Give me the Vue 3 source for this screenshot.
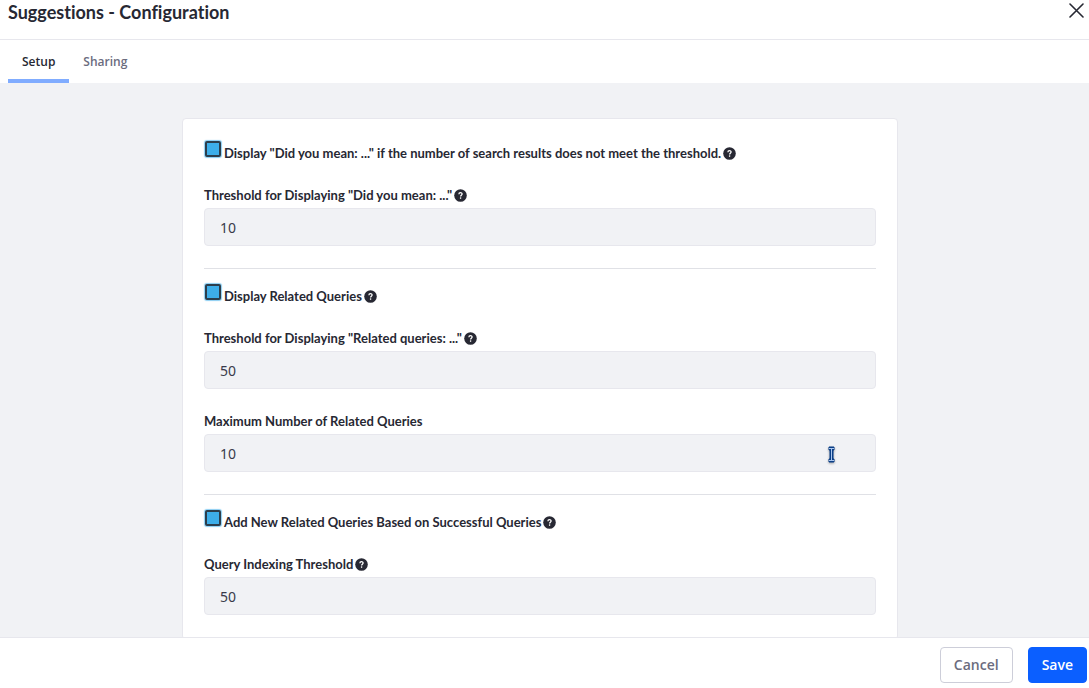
<script setup>
import { reactive } from 'vue'

const sections = reactive([
  {
    id: 'spellcheck',
    label: 'Display "Did you mean: ..." if the number of search results does not meet the threshold.',
    checked: true,
    fields: [
      { id: 'spellcheck-threshold', label: 'Threshold for Displaying "Did you mean: ..."', value: '10', help: true }
    ]
  },
  {
    id: 'related',
    label: 'Display Related Queries',
    checked: true,
    fields: [
      { id: 'related-threshold', label: 'Threshold for Displaying "Related queries: ..."', value: '50', help: true },
      { id: 'related-max', label: 'Maximum Number of Related Queries', value: '10', help: false, pointer: true }
    ]
  },
  {
    id: 'indexing',
    label: 'Add New Related Queries Based on Successful Queries',
    checked: true,
    fields: [
      { id: 'indexing-threshold', label: 'Query Indexing Threshold', value: '50', help: true }
    ]
  }
])
</script>

<template>
  <div class="dialog">
    <header class="header">
      <h1>Suggestions - Configuration</h1>
      <button class="close" type="button" aria-label="Close">
        <svg viewBox="0 0 16 16" width="16" height="16">
          <path d="M2 1 15 14M15 1 2 14" fill="none" stroke="#272833" stroke-width="1.6" stroke-linecap="round" />
        </svg>
      </button>
    </header>

    <nav class="tabs">
      <a class="tab active" href="#setup">Setup</a>
      <a class="tab" href="#sharing">Sharing</a>
    </nav>

    <main class="body">
      <form class="card">
        <section v-for="section in sections" :key="section.id" class="section">
          <div class="toggle">
            <input :id="section.id" v-model="section.checked" type="checkbox">
            <label :for="section.id">{{ section.label }}</label>
            <svg class="help" viewBox="0 0 13 13" width="13" height="13">
              <circle cx="6.5" cy="6.5" r="6.3" fill="#272833" />
              <path d="M4.9 5.2C4.9 3.2 8.1 3.2 8.1 5.1C8.1 6.2 6.6 6.2 6.6 7.5" fill="none" stroke="#fff" stroke-width="1.3" />
              <circle cx="6.6" cy="9.1" r=".8" fill="#fff" />
            </svg>
          </div>
          <div v-for="field in section.fields" :key="field.id" class="field">
            <div class="caption">
              <label :for="field.id">{{ field.label }}</label>
              <svg v-if="field.help" class="help" viewBox="0 0 13 13" width="13" height="13">
                <circle cx="6.5" cy="6.5" r="6.3" fill="#272833" />
                <path d="M4.9 5.2C4.9 3.2 8.1 3.2 8.1 5.1C8.1 6.2 6.6 6.2 6.6 7.5" fill="none" stroke="#fff" stroke-width="1.3" />
                <circle cx="6.6" cy="9.1" r=".8" fill="#fff" />
              </svg>
            </div>
            <div class="control">
              <input :id="field.id" v-model="field.value" type="text">
              <svg v-if="field.pointer" class="pointer" viewBox="0 0 7 17" width="7" height="17">
                <path d="M1 1H6V4H5V13H6V16H1V13H2V4H1Z" fill="#0b3f87" stroke="#0b3f87" />
                <path d="M1 2.5H6M3.5 2V15M1 14.5H6" fill="none" stroke="#a9c6ee" />
              </svg>
            </div>
          </div>
        </section>
      </form>
    </main>

    <footer class="footer">
      <button class="btn cancel" type="button">Cancel</button>
      <button class="btn save" type="submit">Save</button>
    </footer>
  </div>
</template>

<style>
body {
  margin: 0;
  background: #fff;
}
</style>

<style scoped>
.dialog {
  display: flex;
  flex-direction: column;
  height: 100vh;
  color: #272833;
  font-family: Lato, "Noto Sans", sans-serif;
  font-size: 13px;
  font-variant-ligatures: none;
  line-height: 20px;
}

.dialog *,
.dialog {
  box-sizing: border-box;
}

.header {
  display: flex;
  flex: none;
  justify-content: space-between;
  align-items: flex-start;
  padding: 0 5px 15px 8px;
  border-bottom: 1px solid #e7e7ed;
}

h1 {
  margin: 0;
  font-size: 18px;
  font-weight: 700;
  line-height: 24px;
}

.close {
  display: flex;
  padding: 3px 0 0;
  border: 0;
  background: none;
}

.tabs {
  display: flex;
  flex: none;
  padding: 0 8px;
}

.tab {
  padding: 12px 14px 7px;
  border-bottom: 4px solid transparent;
  color: #6b6c7e;
  font-family: "Open Sans", "Noto Sans", sans-serif;
  font-size: 12px;
  font-weight: 600;
  text-decoration: none;
}

.tab.active {
  border-color: #80acff;
  color: #272833;
}

.body {
  flex: 1;
  min-height: 0;
  overflow: hidden;
  padding: 35px 9px 0 0;
  background: #f1f2f5;
}

.card {
  max-width: 716px;
  margin: 0 auto;
  padding: 24px 21px;
  border: 1px solid #e7e7ed;
  border-radius: 4px;
  background: #fff;
}

.section + .section {
  margin-top: 22px;
  padding-top: 17px;
  border-top: 1px solid #e0e1e6;
}

.toggle,
.caption {
  display: flex;
  align-items: center;
  height: 20px;
  font-weight: 700;
}

.toggle input {
  appearance: none;
  align-self: flex-start;
  flex: none;
  width: 16px;
  height: 16px;
  margin: -2px 3px 0 1px;
  border: 2px solid #2c3e4c;
  border-radius: 2px;
  background: #3daee9;
  box-shadow: 0 0 1px 1px #3daee999;
}

.help {
  flex: none;
  margin-left: 2px;
}

.field {
  margin-top: 22px;
}

.control {
  position: relative;
  margin-top: 3px;
}

.control input {
  display: block;
  width: 100%;
  height: 38px;
  padding: 0 15px;
  border: 1px solid #e7e7ed;
  border-radius: 4px;
  outline: 0;
  background: #f1f2f5;
  color: #393a4a;
  font: 14px "Noto Sans", "Open Sans", sans-serif;
}

.pointer {
  position: absolute;
  top: 12px;
  right: 41px;
  filter: drop-shadow(0 1px 1px #0005);
}

.footer {
  display: flex;
  flex: none;
  justify-content: flex-end;
  gap: 15px;
  padding: 9px 2px 5px;
  border-top: 1px solid #e7e7ed;
  background: #fff;
}

.btn {
  height: 36px;
  padding: 0 13px 1px;
  border: 1px solid #cdced9;
  border-radius: 4px;
  background: #fff;
  color: #6b6c7e;
  font: 600 14px "Open Sans", "Noto Sans", sans-serif;
}

.save {
  border-color: #0b5fff;
  background: #0b5fff;
  color: #fff;
}
</style>
